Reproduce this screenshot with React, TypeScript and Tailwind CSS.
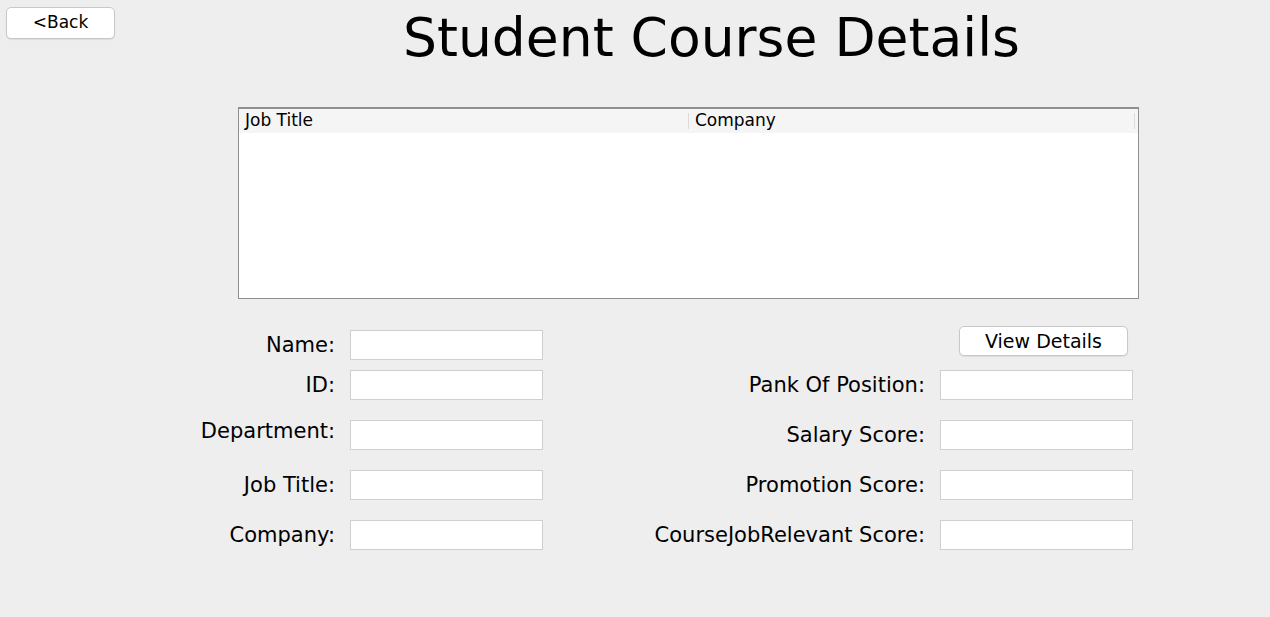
import React from 'react';

const font = { fontFamily: '"DejaVu Sans", "Liberation Sans", sans-serif' };

type Field = { label: string; top: string; labelShift?: string };

const leftFields: Field[] = [
  { label: 'Name:', top: 'mt-0' },
  { label: 'ID:', top: 'mt-[10px]' },
  { label: 'Department:', top: 'mt-[20px]', labelShift: '-translate-y-[3px]' },
  { label: 'Job Title:', top: 'mt-[20px]' },
  { label: 'Company:', top: 'mt-[20px]' },
];

const rightFields: Field[] = [
  { label: 'Pank Of Position:', top: 'mt-[14px]' },
  { label: 'Salary Score:', top: 'mt-[20px]' },
  { label: 'Promotion Score:', top: 'mt-[20px]' },
  { label: 'CourseJobRelevant Score:', top: 'mt-[20px]' },
];

function FieldRow({ field }: { field: Field }) {
  return (
    <div className={`flex h-[30px] items-center justify-end gap-[15px] ${field.top}`}>
      <span className={`whitespace-nowrap text-[21px] text-black ${field.labelShift ?? 'translate-y-[1px]'}`}>
        {field.label}
      </span>
      <input
        type="text"
        className="h-[30px] w-[193px] border border-[#cfcfcf] bg-white outline-none"
      />
    </div>
  );
}

export default function App() {
  return (
    <div className="relative h-[617px] w-[1270px] overflow-hidden bg-[#eeeeee]" style={font}>
      <div className="flex items-start">
        <button
          type="button"
          className="ml-[6px] mt-[7px] h-[32px] w-[109px] rounded-[5px] border border-[#c8c8c8] bg-white text-[17px] text-black shadow-[0_1px_1px_rgba(0,0,0,0.08)]"
        >
          &lt;Back
        </button>
        <h1 className="ml-[288px] mt-[2px] whitespace-nowrap text-[53.5px] leading-[72px] text-black">
          Student Course Details
        </h1>
      </div>

      <div className="ml-[238px] mt-[33px] h-[192px] w-[901px] border border-[#8f8f8f] border-t-2 bg-white">
        <div className="flex h-[24px] items-center bg-[#f5f5f5] text-[17px] text-black">
          <div className="flex h-full w-[449px] items-center pl-[6px]">Job Title</div>
          <div className="h-[16px] w-px bg-[#dcdcdc]" />
          <div className="flex h-full w-[445px] items-center pl-[6px]">Company</div>
          <div className="h-[16px] w-px bg-[#dcdcdc]" />
        </div>
      </div>

      <div className="mt-[31px] flex">
        <div className="ml-[150px] flex w-[393px] flex-col">
          {leftFields.map((f) => (
            <FieldRow key={f.label} field={f} />
          ))}
        </div>
        <div className="ml-[100px] flex w-[490px] flex-col">
          <div className="-mt-[4px] flex h-[30px] justify-end pr-[5px]">
            <button
              type="button"
              className="h-[30px] w-[169px] rounded-[5px] border border-[#c8c8c8] bg-white text-[19px] text-black shadow-[0_1px_1px_rgba(0,0,0,0.08)]"
            >
              View Details
            </button>
          </div>
          {rightFields.map((f) => (
            <FieldRow key={f.label} field={f} />
          ))}
        </div>
      </div>
    </div>
  );
}
